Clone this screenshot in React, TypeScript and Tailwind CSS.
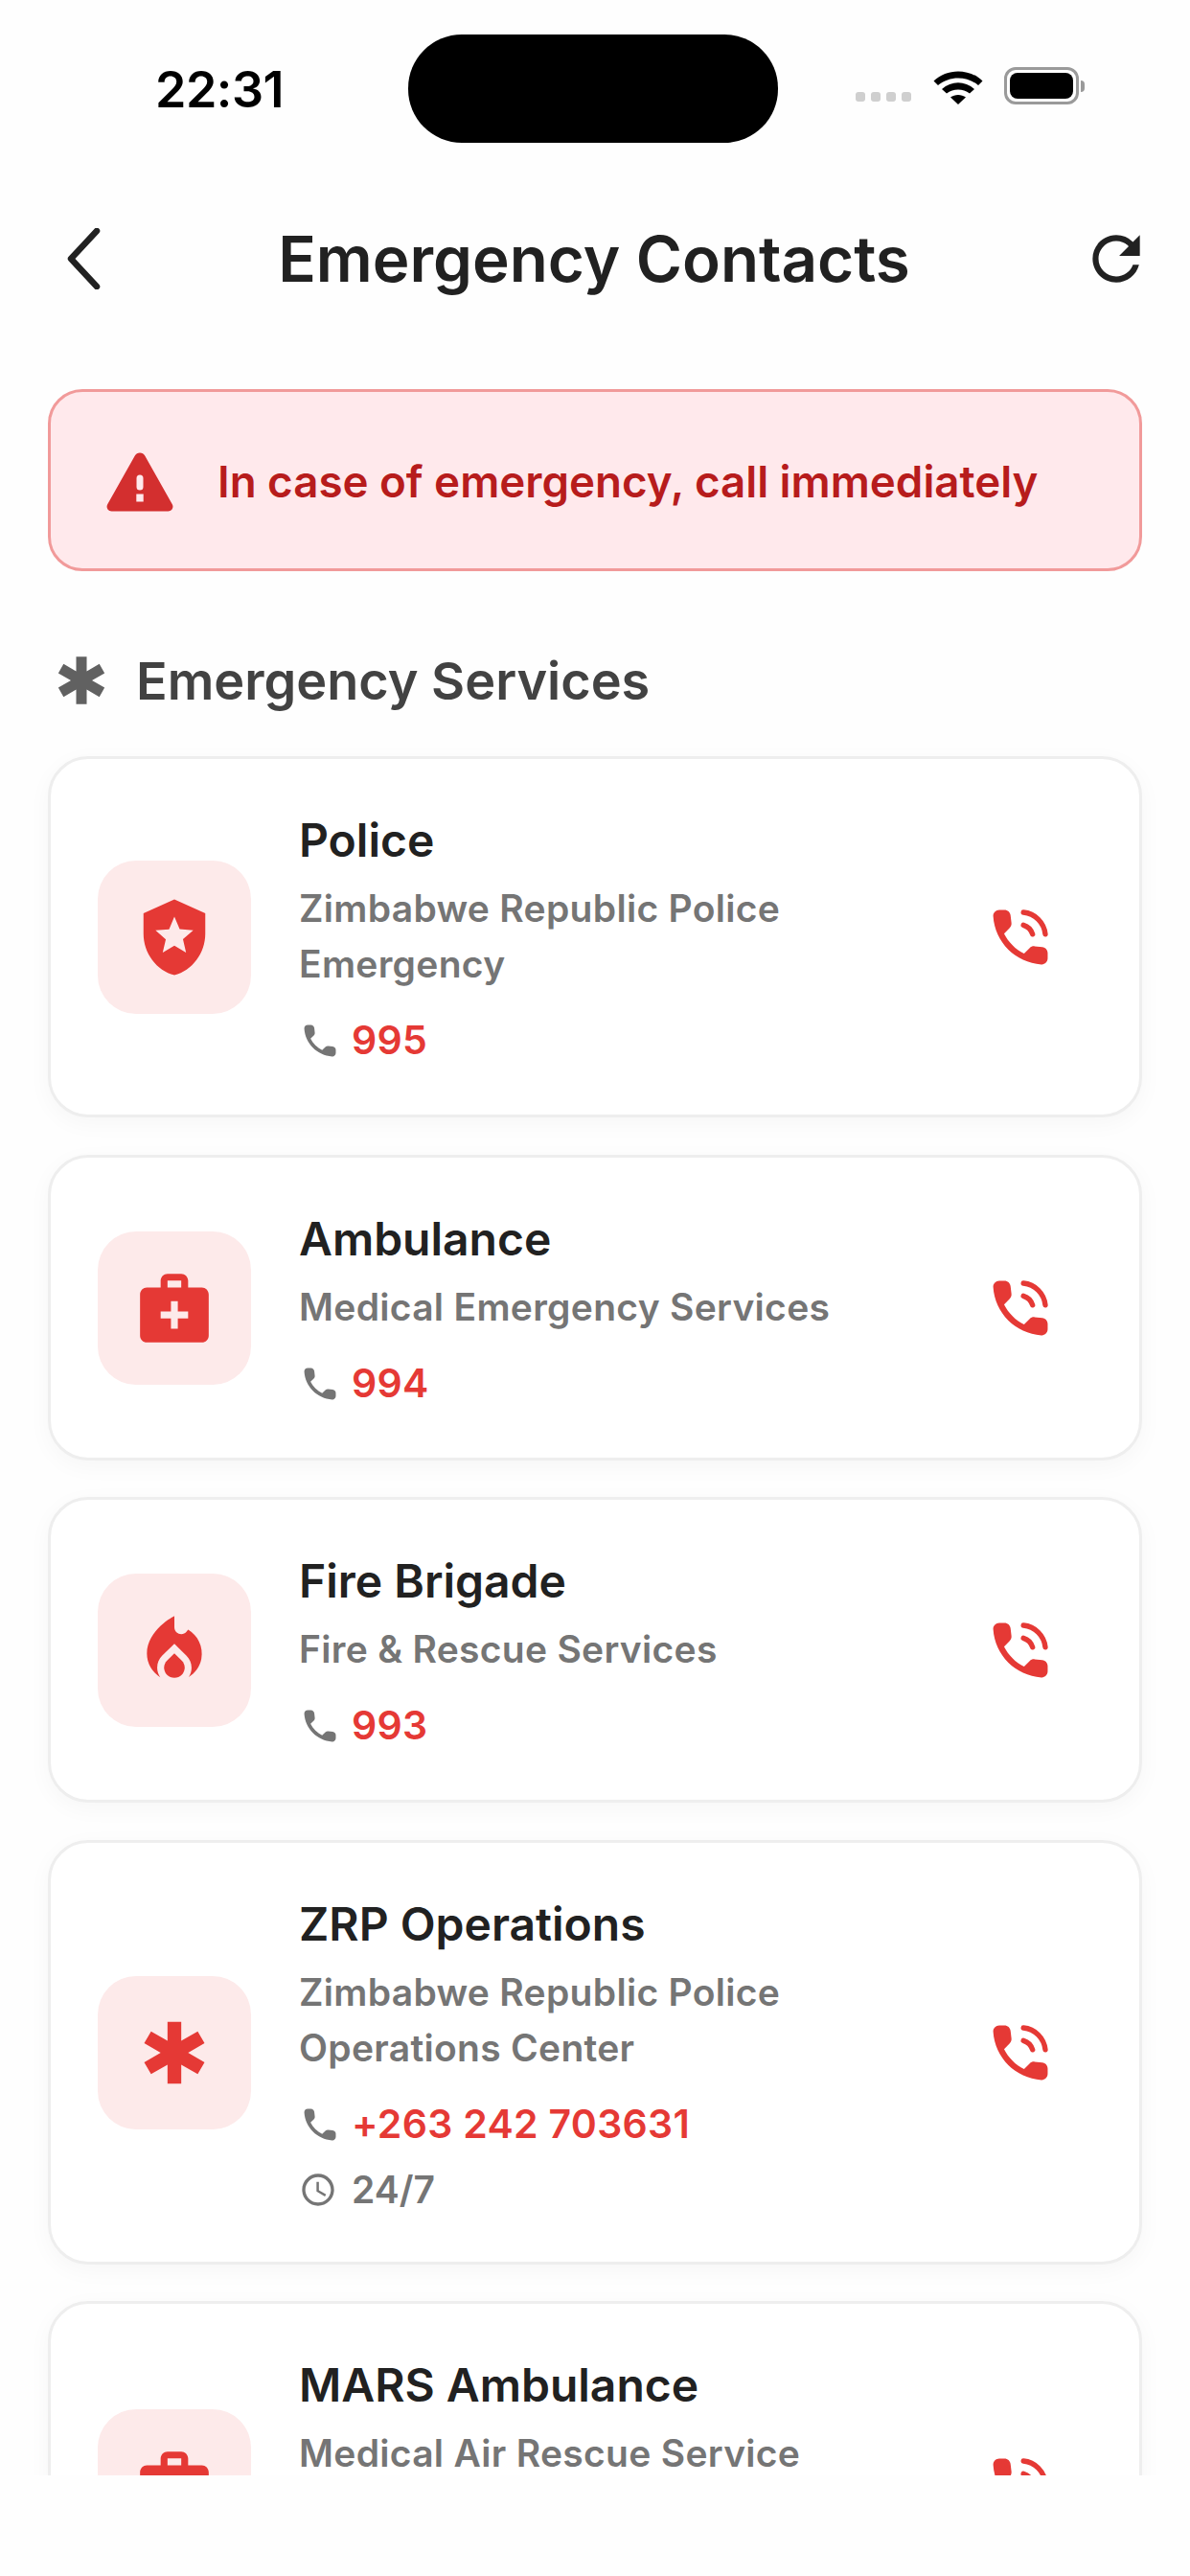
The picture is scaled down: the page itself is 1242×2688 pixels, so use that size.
import React from "react";
import {
  MdAccessTime,
  MdEmergency,
  MdLocalFireDepartment,
  MdLocalPolice,
  MdMedicalServices,
  MdRefresh,
} from "react-icons/md";

const contacts = [
  {
    name: "Police",
    lines: ["Zimbabwe Republic Police", "Emergency"],
    phone: "995",
    Icon: MdLocalPolice,
  },
  {
    name: "Ambulance",
    lines: ["Medical Emergency Services"],
    phone: "994",
    Icon: MdMedicalServices,
  },
  {
    name: "Fire Brigade",
    lines: ["Fire & Rescue Services"],
    phone: "993",
    Icon: MdLocalFireDepartment,
  },
  {
    name: "ZRP Operations",
    lines: ["Zimbabwe Republic Police", "Operations Center"],
    phone: "+263 242 703631",
    hours: "24/7",
    Icon: MdEmergency,
  },
  // cut off by the bottom of the scroll area, its number is never visible
  {
    name: "MARS Ambulance",
    lines: ["Medical Air Rescue Service"],
    Icon: MdMedicalServices,
  },
];

const HANDSET =
  "M19.23 15.26l-2.54-.29c-.61-.07-1.21.14-1.64.57l-1.84 1.84c-2.83-1.44-5.15-3.75-6.59-6.59l1.85-1.85c.43-.43.64-1.03.57-1.64l-.29-2.52c-.12-1.01-.97-1.77-1.99-1.77H5.03c-1.13 0-2.07.94-2 2.07.53 8.54 7.36 15.36 15.89 15.89 1.13.07 2.07-.87 2.07-2v-1.73c.01-1.01-.75-1.86-1.77-1.98z";

const StatusBar = () => (
  <div className="relative flex h-[225px] shrink-0 items-start justify-between pl-[162px] pr-[110px] pt-[62px]">
    <span className="font-['Inter'] text-[52px] leading-[64px] font-semibold tracking-[-0.5px] text-black">
      22:31
    </span>
    {/* dynamic island */}
    <div className="absolute left-[426px] top-[36px] h-[113px] w-[386px] rounded-[56px] bg-black" />
    <div className="flex items-center self-start pt-[8px]">
      <div className="mt-[22px] flex gap-[6px]">
        <div className="h-[10px] w-[10px] rounded-[3px] bg-[#cfcfcf]" />
        <div className="h-[10px] w-[10px] rounded-[3px] bg-[#cfcfcf]" />
        <div className="h-[10px] w-[10px] rounded-[3px] bg-[#cfcfcf]" />
        <div className="h-[10px] w-[10px] rounded-[3px] bg-[#cfcfcf]" />
      </div>
      <svg className="ml-[23px]" width="52" height="38" viewBox="0 0 52 38">
        <path d="M0.5 13.5C14 0 38 0 51.5 13.5L47 18C35 8 17 8 5 18Z" fill="#000" />
        <path d="M9 22C19 13 33 13 43 22L38 26.5C31 21 21 21 14 26.5Z" fill="#000" />
        <path d="M18 30.5C22.5 27 29.5 27 34 30.5L26 38Z" fill="#000" />
      </svg>
      <div className="ml-[22px] flex h-[39px] w-[78px] items-center justify-center rounded-[12px] border-[3px] border-[#9a9a9a] bg-white">
        <div className="h-[27px] w-[66px] rounded-[8px] bg-black" />
      </div>
      <div className="ml-[2px] h-[12px] w-[4px] rounded-r-[4px] bg-[#9a9a9a]" />
    </div>
  </div>
);

const WarningIcon = () => (
  <svg className="mt-[4px]" width="70" height="62" viewBox="0 0 70 62">
    <path
      fillRule="evenodd"
      d="M29.8 3.6a6 6 0 0 1 10.4 0l28.6 50.6c1.8 3.2-.4 7.3-4.2 7.3H5.4c-3.800 0-6-4.100-4.200-7.300ZM31.500 27a3.500 3.500 0 0 1 7 0v9a3.500 3.500 0 0 1-7 0Zm-.2 16.500h7.400v8h-7.400Z"
      fill="#d32f2f"
    />
  </svg>
);

const PhoneIcon = () => (
  <svg className="shrink-0" width="44" height="44" viewBox="0 0 24 24" fill="#757575">
    <path d={HANDSET} />
  </svg>
);

const CallIcon = () => (
  <svg className="shrink-0" width="76" height="76" viewBox="0 0 24 24" fill="none">
    <path d={HANDSET} fill="#e53935" />
    <path
      d="M13 3.800A8 8 0 0 1 20.200 11M13 8A4.500 4.500 0 0 1 16 11"
      stroke="#e53935"
      strokeWidth="1.700"
      strokeLinecap="round"
    />
  </svg>
);

const ContactCard = ({ contact }: { contact: (typeof contacts)[number] }) => {
  const { Icon } = contact;
  return (
    <div className="flex min-h-[318px] shrink-0 items-center rounded-[42px] border-[3px] border-[#eeeeee] bg-white pt-[52px] pb-[51px] pl-[49px] pr-[86px] shadow-[0_6px_24px_rgba(0,0,0,0.035)] last:min-h-[385px]">
      <div className="flex h-[160px] w-[160px] shrink-0 items-center justify-center rounded-[40px] bg-[#fdeaea] text-[#e53935]">
        <Icon size={86} />
      </div>
      <div className="ml-[50px] min-w-0 flex-1 self-start">
        <div className="text-[48px] leading-[66px] font-semibold text-[#212121]">
          {contact.name}
        </div>
        <div className="mt-[9px] text-[39px] leading-[58px] font-semibold tracking-[0.3px] text-[#757575]">
          {contact.lines.map((line) => (
            <div key={line}>{line}</div>
          ))}
        </div>
        {contact.phone && (
          <div className="mt-[25px] flex h-[52px] items-center">
            <PhoneIcon />
            <span className="ml-[11px] text-[41px] font-semibold tracking-[0.3px] text-[#e53935]">
              {contact.phone}
            </span>
          </div>
        )}
        {contact.hours && (
          <div className="mt-[19px] flex h-[47px] items-center">
            <MdAccessTime size={40} className="text-[#757575]" />
            <span className="ml-[15px] text-[39px] font-semibold text-[#757575]">
              {contact.hours}
            </span>
          </div>
        )}
      </div>
      <CallIcon />
    </div>
  );
};

export default function App() {
  return (
    <div className="flex h-[2688px] w-[1242px] flex-col overflow-hidden bg-[#fefefe] font-['Inter',sans-serif]">
      <StatusBar />

      {/* header */}
      <div className="flex h-[90px] shrink-0 items-center justify-between pl-[68px] pr-[40px]">
        <svg width="40" height="64" viewBox="0 0 40 64" fill="none">
          <path
            d="M33 3L6 32L33 61"
            stroke="#212121"
            strokeWidth="6.500"
            strokeLinecap="round"
            strokeLinejoin="round"
          />
        </svg>
        <div className="ml-[4px] pt-[2px] text-[65.500px] font-semibold leading-none text-[#212121]">
          Emergency Contacts
        </div>
        <MdRefresh size={74} className="text-[#212121]" />
      </div>

      <div className="flex h-[2268px] shrink-0 flex-col overflow-hidden px-[50px] pt-[91px]">
        {/* warning banner */}
        <div className="flex h-[190px] shrink-0 items-center rounded-[36px] border-[3px] border-[#f19a9a] bg-[#ffe9ec] pl-[58px]">
          <WarningIcon />
          <span className="ml-[46px] pt-[4px] text-[45.700px] font-semibold text-[#b71c1c]">
            In case of emergency, call immediately
          </span>
        </div>

        <div className="mt-[84px] flex h-[60px] shrink-0 items-center pl-[2px]">
          <MdEmergency size={66} className="text-[#616161]" />
          <span className="ml-[24px] text-[54px] font-semibold text-[#424242]">
            Emergency Services
          </span>
        </div>

        <div className="mt-[49px] flex flex-col gap-[38.500px]">
          {contacts.map((contact) => (
            <ContactCard key={contact.name} contact={contact} />
          ))}
        </div>
      </div>
    </div>
  );
}
